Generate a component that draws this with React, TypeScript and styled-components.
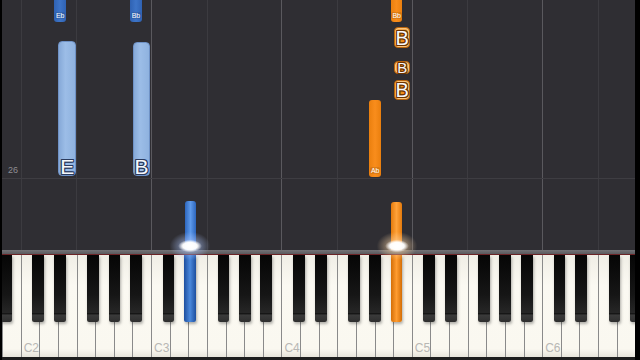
import React from "react";
import styled, { createGlobalStyle, css } from "styled-components";

const STAGE_W = 633;
const WHITE_COUNT = 34;
const W = STAGE_W / WHITE_COUNT;
const LETTERS = ["C", "D", "E", "F", "G", "A", "B"];
const BLACK_OFFSETS: [string, number][] = [
  ["C#", 17.6],
  ["D#", 39.4],
  ["F#", 72.5],
  ["G#", 93.8],
  ["A#", 115.3],
];
const BLACK_W = 11.8;

const cIndex = (oct: number) => 1 + (oct - 2) * 7;
const whiteX = (i: number) => i * W;
const blackCenter = (oct: number, name: string) =>
  cIndex(oct) * W + (BLACK_OFFSETS.find((b) => b[0] === name)?.[1] ?? 0);

const Global = createGlobalStyle`
  html, body { margin: 0; padding: 0; background: #000; }
  body { font-family: "Liberation Sans", Arial, sans-serif; }
`;

const Screen = styled.div`
  width: 640px;
  height: 360px;
  box-sizing: border-box;
  padding: 0 5px 0 2px;
  background: #000;
  display: flex;
  overflow: hidden;
`;

const Stage = styled.div`
  position: relative;
  flex: 1;
  min-width: 0;
  display: flex;
  flex-direction: column;
`;

const Roll = styled.div`
  position: relative;
  flex: none;
  height: 250px;
  background: #2f2e33;
  overflow: hidden;
`;

const VLine = styled.div<{ $major: boolean }>`
  position: absolute;
  top: 0;
  bottom: 0;
  width: 1px;
  background: ${(p) => (p.$major ? "#5a595e" : "#3c3b40")};
`;

const HLine = styled.div`
  position: absolute;
  left: 0;
  right: 0;
  top: 178px;
  height: 1px;
  background: #3e3d42;
`;

const BarNumber = styled.span`
  position: absolute;
  left: 6px;
  top: 165px;
  font-size: 9px;
  line-height: 10px;
  color: #8e8d92;
`;

type Hand = "left" | "right";
type Kind = "black" | "white" | "box" | "active";

const noteSkin = (kind: Kind, hand: Hand) => {
  if (hand === "left") {
    if (kind === "white")
      return css`
        background: linear-gradient(to right, #86a9d8, #9cbde7 40%, #8fb2df);
        border: 1px solid #6f92c6;
        border-radius: 4px;
      `;
    if (kind === "active")
      return css`
        background: linear-gradient(to right, #2d66bd, #5d99ea 50%, #2d66bd);
        border-radius: 3px 3px 0 0;
      `;
    return css`
      background: linear-gradient(to right, #2f62b3, #3d74c7 50%, #2f62b3);
      border-radius: 3px;
    `;
  }
  if (kind === "box")
    return css`
      background: #ee8d1c;
      border: 1px solid #b9650e;
      box-shadow: inset 0 0 0 1.5px #f9c47c;
      border-radius: 4px;
    `;
  if (kind === "active")
    return css`
      background: linear-gradient(to right, #e47a0c, #ffa23a 50%, #e47a0c);
      border-radius: 3px 3px 0 0;
    `;
  return css`
    background: linear-gradient(to right, #ea7f0e, #f98d1c 50%, #ea7f0e);
    border-radius: 3px;
  `;
};

const Note = styled.div.attrs<{ $x: number; $y: number; $w: number; $h: number }>((p) => ({
  style: { left: p.$x, top: p.$y, width: p.$w, height: p.$h },
}))<{ $x: number; $y: number; $w: number; $h: number; $kind: Kind; $hand: Hand }>`
  position: absolute;
  box-sizing: border-box;
  display: flex;
  flex-direction: column;
  justify-content: ${(p) => (p.$kind === "box" ? "center" : "flex-end")};
  align-items: center;
  ${(p) => noteSkin(p.$kind, p.$hand)}
`;

const SmallLabel = styled.span`
  font-size: 7px;
  line-height: 7px;
  color: #fff;
  padding: 0 1px;
  margin-bottom: 3px;
  border-radius: 2px;
  background: rgba(0, 0, 0, 0.1);
  letter-spacing: -0.2px;
`;

const BigLabel = styled.span<{ $size: number; $outline: string }>`
  font-size: ${(p) => p.$size}px;
  line-height: ${(p) => Math.round(p.$size * 0.82)}px;
  color: #f6f8fc;
  text-shadow: 1px 0 0 ${(p) => p.$outline}, -1px 0 0 ${(p) => p.$outline},
    0 1px 0 ${(p) => p.$outline}, 0 -1px 0 ${(p) => p.$outline},
    1px 1px 0 ${(p) => p.$outline}, -1px -1px 0 ${(p) => p.$outline},
    1px -1px 0 ${(p) => p.$outline}, -1px 1px 0 ${(p) => p.$outline};
`;

const Glow = styled.div.attrs<{ $cx: number }>((p) => ({
  style: { left: p.$cx - 27 },
}))<{ $cx: number; $tint: string }>`
  position: absolute;
  top: 224px;
  width: 54px;
  height: 38px;
  pointer-events: none;
  background: radial-gradient(
      ellipse 22% 16% at 50% 58%,
      rgba(255, 255, 255, 1) 0%,
      rgba(255, 255, 255, 0.95) 60%,
      rgba(255, 255, 255, 0) 100%
    ),
    radial-gradient(
      ellipse 50% 50% at 50% 58%,
      rgba(255, 255, 255, 0.9) 0%,
      ${(p) => p.$tint} 35%,
      rgba(255, 255, 255, 0) 75%
    );
`;

const Rail = styled.div`
  flex: none;
  height: 4px;
  background: linear-gradient(#747377, #5a595d);
`;

const Keyboard = styled.div`
  position: relative;
  flex: 1;
  display: flex;
  border-top: 1px solid #6b2326;
  padding-bottom: 3px;
  background: #1c1c1c;
  overflow: hidden;
`;

const WhiteKey = styled.div`
  flex: 1;
  box-sizing: border-box;
  border-left: 1px solid #8a8a8a;
  background: linear-gradient(#f0eee6, #fbf9f2 30%, #faf8f0 92%, #e6e3da);
  display: flex;
  align-items: flex-end;
  padding: 0 0 3px 2px;
`;

const KeyLabel = styled.span`
  font-size: 12px;
  line-height: 12px;
  color: #b8b7b4;
`;

const blackSkin = {
  none: css`
    background: linear-gradient(
      to bottom,
      #050505 0%,
      #161616 60%,
      #262626 86%,
      #121212 87%,
      #3a3a3a 90%,
      #2e2e2e 100%
    );
  `,
  left: css`
    background: linear-gradient(to right, #1d4e9e, #4a88dc 50%, #1d4e9e);
  `,
  right: css`
    background: linear-gradient(to right, #d46e06, #ff9c30 50%, #d46e06);
  `,
};

const BlackKey = styled.div.attrs<{ $cx: number }>((p) => ({
  style: { left: p.$cx - BLACK_W / 2 },
}))<{ $cx: number; $pressed: "none" | "left" | "right" }>`
  position: absolute;
  top: 0;
  width: ${BLACK_W}px;
  height: 67px;
  border-radius: 0 0 2px 2px;
  box-shadow: 1px 2px 3px rgba(0, 0, 0, 0.3);
  ${(p) => blackSkin[p.$pressed]}
`;

type NoteData = {
  x: number;
  y: number;
  w: number;
  h: number;
  kind: Kind;
  hand: Hand;
  label?: string;
  big?: number;
};

const blackNote = (cx: number, top: number, bottom: number, hand: Hand, label?: string, kind: Kind = "black"): NoteData => ({
  x: cx - 5.75,
  y: top,
  w: 11.5,
  h: bottom - top,
  kind,
  hand,
  label,
});

const whiteNote = (i: number, top: number, bottom: number, hand: Hand, kind: Kind, label: string, big: number, inset = 0.5): NoteData => ({
  x: whiteX(i) + inset,
  y: top,
  w: W - inset * 2,
  h: bottom - top,
  kind,
  hand,
  label,
  big,
});

const NOTES: NoteData[] = [
  blackNote(blackCenter(2, "D#"), -6, 22, "left", "Eb"),
  blackNote(blackCenter(2, "A#"), -6, 22, "left", "Bb"),
  whiteNote(3, 41, 176, "left", "white", "E", 21),
  whiteNote(7, 42, 176, "left", "white", "B", 21),
  blackNote(blackCenter(3, "D#"), 201, 252, "left", undefined, "active"),
  blackNote(blackCenter(4, "A#"), -6, 22, "right", "Bb"),
  whiteNote(21, 27, 48, "right", "box", "B", 20, 1.5),
  whiteNote(21, 61, 74, "right", "box", "B", 15, 1.5),
  whiteNote(21, 80, 100, "right", "box", "B", 20, 1.5),
  blackNote(blackCenter(4, "G#"), 100, 177, "right", "Ab"),
  blackNote(blackCenter(4, "A#"), 202, 252, "right", undefined, "active"),
];

const GRID: { x: number; major: boolean }[] = [];
for (let oct = 2; oct <= 6; oct++) {
  GRID.push({ x: Math.round(whiteX(cIndex(oct))), major: oct > 2 });
  GRID.push({ x: Math.round(whiteX(cIndex(oct) + 3)), major: false });
}

const WHITE_KEYS = Array.from({ length: WHITE_COUNT }, (_, i) => {
  const letter = i === 0 ? "B" : LETTERS[(i - 1) % 7];
  const oct = i === 0 ? 1 : 2 + Math.floor((i - 1) / 7);
  return { id: `${letter}${oct}`, label: letter === "C" ? `C${oct}` : "" };
});

const PRESSED: Record<string, "left" | "right"> = { "D#3": "left", "A#4": "right" };

const BLACK_KEYS: { id: string; cx: number }[] = [];
for (let oct = 1; oct <= 6; oct++) {
  for (const [name] of BLACK_OFFSETS) {
    const cx = blackCenter(oct, name);
    if (cx + BLACK_W / 2 > 0 && cx - BLACK_W / 2 < STAGE_W) BLACK_KEYS.push({ id: `${name}${oct}`, cx });
  }
}

export default function App() {
  return (
    <>
      <Global />
      <Screen>
        <Stage>
          <Roll>
            {GRID.map((g) => (
              <VLine key={g.x} $major={g.major} style={{ left: g.x }} />
            ))}
            <HLine />
            <BarNumber>26</BarNumber>
            {NOTES.map((n, i) => (
              <Note key={i} $x={n.x} $y={n.y} $w={n.w} $h={n.h} $kind={n.kind} $hand={n.hand}>
                {n.label &&
                  (n.big ? (
                    <BigLabel $size={n.big} $outline={n.hand === "left" ? "#2a3b5e" : "#6b3300"}>
                      {n.label}
                    </BigLabel>
                  ) : (
                    <SmallLabel>{n.label}</SmallLabel>
                  ))}
              </Note>
            ))}
          </Roll>
          <Rail />
          <Keyboard>
            {WHITE_KEYS.map((k) => (
              <WhiteKey key={k.id}>{k.label && <KeyLabel>{k.label}</KeyLabel>}</WhiteKey>
            ))}
            {BLACK_KEYS.map((b) => (
              <BlackKey key={b.id} $cx={b.cx} $pressed={PRESSED[b.id] ?? "none"} />
            ))}
          </Keyboard>
          <Glow $cx={blackCenter(3, "D#")} $tint="rgba(175,200,255,0.45)" />
          <Glow $cx={blackCenter(4, "A#")} $tint="rgba(255,215,165,0.45)" />
        </Stage>
      </Screen>
    </>
  );
}
